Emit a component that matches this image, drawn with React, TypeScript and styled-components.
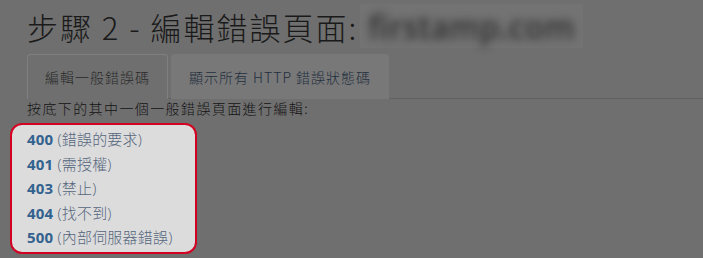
import styled, { createGlobalStyle } from "styled-components";

const GlobalStyle = createGlobalStyle`
  html, body {
    margin: 0;
    padding: 0;
    background: #6f6f6f;
    font-family: "Open Sans", "Noto Sans CJK TC", sans-serif;
  }
`;

const errorPages = [
  { code: "400", label: "錯誤的要求" },
  { code: "401", label: "需授權" },
  { code: "403", label: "禁止" },
  { code: "404", label: "找不到" },
  { code: "500", label: "內部伺服器錯誤" },
];

function App() {
  return (
    <>
      <GlobalStyle />
      <Page>
        <Heading>
          步驟 2 - 編輯錯誤頁面:
          <Domain>
            <DomainText>firstamp.com</DomainText>
          </Domain>
        </Heading>
        <Tabs>
          <Tab $active>編輯一般錯誤碼</Tab>
          <Tab>顯示所有 HTTP 錯誤狀態碼</Tab>
        </Tabs>
        <Hint>按底下的其中一個一般錯誤頁面進行編輯:</Hint>
        <Highlight>
          {errorPages.map((p) => (
            <ErrorLink key={p.code}>
              <Code>{p.code}</Code> ({p.label})
            </ErrorLink>
          ))}
        </Highlight>
      </Page>
    </>
  );
}

export default App;

const Page = styled.div`
  padding: 0 0 0 27px;
  width: 703px;
  height: 258px;
  box-sizing: border-box;
  overflow: hidden;
`;

const Heading = styled.h1`
  display: flex;
  align-items: center;
  margin: 0;
  height: 52px;
  font-family: "Noto Sans CJK TC", sans-serif;
  font-size: 31px;
  font-weight: 300;
  letter-spacing: 2px;
  color: #1a1a1a;
  white-space: nowrap;
`;

const Domain = styled.span`
  display: inline-flex;
  align-items: center;
  margin-left: 2px;
  padding: 0 8px;
  height: 44px;
  background: #737373;
`;

const DomainText = styled.span`
  display: inline-block;
  font-family: "Open Sans", sans-serif;
  font-size: 32px;
  font-weight: 600;
  letter-spacing: 0;
  color: transparent;
  text-shadow: 0 0 9px rgba(45, 45, 45, 0.95);
`;

const Tabs = styled.div`
  display: flex;
  gap: 3px;
  margin-top: 2px;
  height: 44px;
  border-bottom: 1px solid #626262;
`;

const Tab = styled.div<{ $active?: boolean }>`
  display: flex;
  align-items: center;
  justify-content: center;
  box-sizing: border-box;
  height: 45px;
  padding: 0 17px;
  border-radius: 4px 4px 0 0;
  font-family: "Noto Sans CJK TC", sans-serif;
  font-size: 14px;
  font-weight: 300;
  letter-spacing: 1px;
  border: 1px solid ${({ $active }) => ($active ? "#808080" : "transparent")};
  border-bottom-color: ${({ $active }) => ($active ? "#6f6f6f" : "transparent")};
  background: ${({ $active }) => ($active ? "#6f6f6f" : "#787878")};
  color: ${({ $active }) => ($active ? "#2a2a2a" : "#1f2e3e")};
`;

const Hint = styled.p`
  margin: 0;
  padding-top: 1px;
  line-height: 17px;
  font-family: "Noto Sans CJK TC", sans-serif;
  font-size: 14px;
  font-weight: 300;
  letter-spacing: 1.4px;
  color: #141414;
`;

const Highlight = styled.div`
  display: flex;
  flex-direction: column;
  margin: 6px 0 0 -17px;
  width: 187px;
  box-sizing: border-box;
  padding: 2px 15px;
  border: 2px solid #d40022;
  border-radius: 12px;
  background: #dcdcdc;
`;

const ErrorLink = styled.a`
  display: block;
  line-height: 24.5px;
  font-size: 15px;
  font-weight: 300;
  letter-spacing: 0.2px;
  color: #56667c;
  white-space: nowrap;
  cursor: pointer;
`;

const Code = styled.b`
  font-weight: 700;
  color: #33628f;
`;
